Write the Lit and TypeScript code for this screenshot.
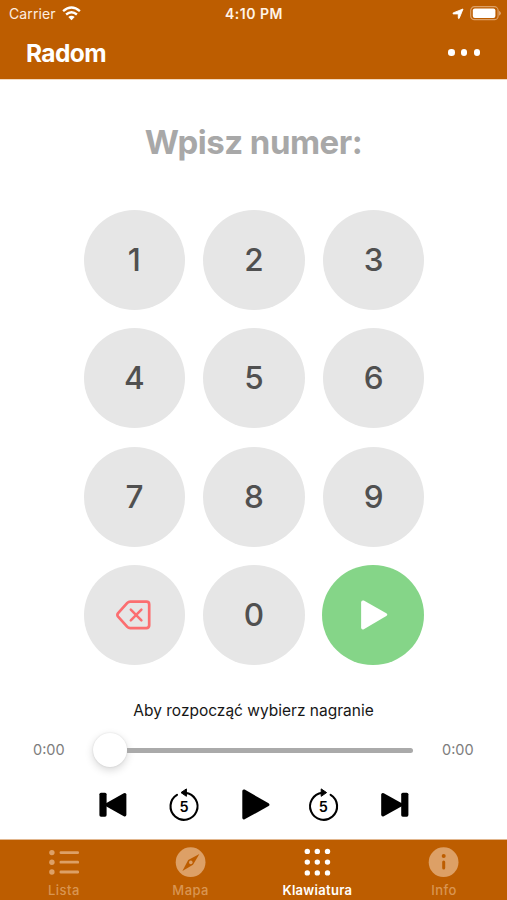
import { LitElement, html, svg, css } from "lit";
import { customElement, property, state } from "lit/decorators.js";
import { classMap } from "lit/directives/class-map.js";

const backspaceIcon = html`<svg width="36" height="32" viewBox="0 0 36 32" fill="none" stroke="#fb6e70" stroke-linecap="round" stroke-linejoin="round">
  <path stroke-width="2.7" d="M14.2 2.7H30.4Q33.2 2.7 33.2 5.5V26.3Q33.2 29.1 30.4 29.1H14.2Q12.5 29.1 11.3 27.9L2.1 17.6Q.7 15.9 2.1 14.2L11.3 3.9Q12.5 2.7 14.2 2.7Z" />
  <path stroke-width="2.5" d="M14.8 10.7l10.6 10.6M25.4 10.7L14.8 21.3" />
</svg>`;

const startIcon = html`<svg width="30" height="32" viewBox="0 0 30 32" fill="#fff">
  <path d="M3.8 1.6L26.3 14.3Q28.4 15.7 26.3 17.1L3.8 30.2Q1.2 31 1.1 28.4V3.4Q1.2.8 3.8 1.6Z" />
</svg>`;

const previousIcon = html`<svg width="40" height="36" viewBox="0 0 40 36">
  <rect x="6.4" y="5.7" width="7.2" height="24" rx="1.6" />
  <path d="M13 16.2L30.8 6.2Q33.2 5.4 33.4 7.6V27.8Q33.2 30 30.8 29.2L13 19.2Q11.4 17.7 13 16.2Z" />
</svg>`;

const nextIcon = html`<svg width="40" height="36" viewBox="0 0 40 36">
  <rect x="26.2" y="5.7" width="7.2" height="24" rx="1.6" />
  <path d="M26.8 16.2L8.8 6.2Q6.4 5.4 6.2 7.6V27.8Q6.4 30 8.8 29.2L26.8 19.2Q28.4 17.7 26.8 16.2Z" />
</svg>`;

const playIcon = html`<svg width="40" height="36" viewBox="0 0 40 36">
  <path d="M10.6 2.6L34.6 16.3Q36.4 17.7 34.6 19.1L10.6 32.3Q8.4 33 8.3 30.8V4.1Q8.4 1.9 10.6 2.6Z" />
</svg>`;

const ring = svg`<path fill="none" stroke="#000" stroke-width="2.1" stroke-linecap="round" d="M13 7.8A13.5 13.5 0 1 0 21.4 5.9" />
  <path stroke="#000" stroke-width="1" stroke-linejoin="round" d="M17 5.6L22.4 1.9V9.3Z" />`;

const rewindIcon = html`<svg class="seek" width="40" height="36" viewBox="0 0 40 36">
  ${ring}<text x="20.1" y="24.8">5</text>
</svg>`;

const forwardIcon = html`<svg class="seek" width="40" height="36" viewBox="0 0 40 36">
  <g transform="matrix(-1 0 0 1 39.6 0)">${ring}</g><text x="19.4" y="24.8">5</text>
</svg>`;

const listIcon = html`<svg width="32" height="32" viewBox="0 0 32 32" fill="currentColor">
  ${[6.6, 16.2, 26].map(
    (y) => svg`<circle cx="4.9" cy=${y} r="2.7" /><rect x="12.6" y=${y - 1.4} width="19.4" height="2.8" rx="1.2" />`
  )}
</svg>`;

const compassIcon = html`<svg width="32" height="32" viewBox="0 0 32 32" fill="currentColor">
  <circle cx="16.6" cy="16.2" r="14.9" />
  <path fill="#bd5d00" d="M25.4 8L19 18.8L8.4 25L14.2 14Z" />
  <circle cx="16.8" cy="16.4" r="1.8" />
</svg>`;

const keypadIcon = html`<svg width="32" height="32" viewBox="0 0 32 32" fill="currentColor">
  ${[5.4, 16.1, 26.9].map((y) => [6.3, 16.3, 26.5].map((x) => svg`<circle cx=${x} cy=${y} r="2.7" />`))}
</svg>`;

const infoIcon = html`<svg width="32" height="32" viewBox="0 0 32 32" fill="currentColor">
  <circle cx="15.6" cy="16.2" r="14.9" />
  <g fill="#bd5d00"><circle cx="15.7" cy="10.1" r="2" /><rect x="14.2" y="14.4" width="3" height="9.2" rx="1.5" /></g>
</svg>`;

@customElement("status-bar")
class StatusBar extends LitElement {
  static styles = css`
    :host { display: grid; grid-template-columns: 1fr auto 1fr; align-items: center; height: 27px; padding: 0 6px 0 9px; color: #fff; font-size: 14px; }
    .carrier, .status { display: flex; align-items: center; }
    .carrier { gap: 6px; color: #fdeee0; letter-spacing: 0.1px; }
    .clock { font-weight: 600; font-size: 14px; letter-spacing: 0.5px; margin-right: 2px; color: #fff4e8; }
    .status { justify-content: flex-end; gap: 6px; }
    svg { display: block; }
  `;
  render() {
    return html`
      <div class="carrier"><span>Carrier</span>
        <svg width="19" height="15" viewBox="0 0 19 15" fill="none" stroke="#fff" stroke-width="2.4">
          <path d="M1.1 5.2Q9.5 -2.1 17.9 5.2" /><path d="M4.1 8.5Q9.5 3.9 14.9 8.5" />
          <path fill="#fff" stroke="none" d="M6.3 10.9Q9.5 8.4 12.7 10.9L9.5 14.2Z" />
        </svg>
      </div>
      <div class="clock">4:10 PM</div>
      <div class="status">
        <svg width="12" height="12" viewBox="0 0 12 12" fill="#fff" stroke="#fff" stroke-width=".9" stroke-linejoin="round"><path d="M11 1L7.2 10.3Q6.6 11 6.3 10V5.9H1.4Q.5 5.5 1.2 4.9Z" /></svg>
        <svg width="31" height="15" viewBox="0 0 31 15">
          <rect x=".7" y=".7" width="27.4" height="13" rx="3.8" fill="none" stroke="#dda066" stroke-width="1.2" />
          <rect x="2.8" y="2.5" width="22.6" height="9.5" rx="2" fill="#fff" />
          <path fill="#dda066" d="M29 4.8Q31 6 31 7.3T29 9.8Z" />
        </svg>
      </div>`;
  }
}

@customElement("tab-item")
class TabItem extends LitElement {
  @property() label = "";
  @property({ type: Boolean }) active = false;
  @property({ attribute: false }) icon: unknown;
  static styles = css`
    :host { display: block; flex: 1; }
    .tab { display: flex; flex-direction: column; align-items: center; padding-top: 6px; color: #dda066; }
    .label { font: 500 13px/16px Inter, sans-serif; margin: 4px 0 0 1px; letter-spacing: 0.45px; color: #d99552; }
    .active { color: #fff; }
    .active .label { color: #fff; font-weight: 600; letter-spacing: 0.3px; }
    svg { display: block; }
  `;
  render() {
    return html`<div class=${classMap({ tab: true, active: this.active })}>${this.icon}<span class="label">${this.label}</span></div>`;
  }
}

@customElement("audio-player")
class AudioPlayer extends LitElement {
  static styles = css`
    :host { display: block; }
    .hint { text-align: center; font-size: 15.5px; line-height: 20px; color: #161616; }
    .timeline { display: flex; align-items: center; height: 36px; margin-top: 10.5px; padding: 0 33px; color: #7d7d7d; font-size: 14.5px; }
    .time { width: 32px; white-space: nowrap; }
    .slider { flex: 1; display: flex; align-items: center; margin: 0 29px 0 28px; }
    .thumb { width: 34px; height: 34px; border-radius: 50%; background: #fff; box-shadow: 0 3px 9px rgba(0, 0, 0, 0.16), 0 0 2px rgba(0, 0, 0, 0.12); }
    .track { flex: 1; height: 5px; margin-top: 1px; border-radius: 0 3px 3px 0; background: #aaa; }
    .controls { display: flex; justify-content: center; gap: 30.3px; margin: 19px 0 0 1px; }
    svg { display: block; }
    .seek text { font: 600 14.5px Inter, sans-serif; text-anchor: middle; }
  `;
  render() {
    return html`
      <div class="hint">Aby rozpocząć wybierz nagranie</div>
      <div class="timeline">
        <span class="time">0:00</span>
        <div class="slider"><div class="thumb"></div><div class="track"></div></div>
        <span class="time">0:00</span>
      </div>
      <div class="controls">${previousIcon}${rewindIcon}${playIcon}${forwardIcon}${nextIcon}</div>`;
  }
}

@customElement("app-root")
class AppRoot extends LitElement {
  @state() private activeTab = "Klawiatura";

  private tabs = [
    { label: "Lista", icon: listIcon },
    { label: "Mapa", icon: compassIcon },
    { label: "Klawiatura", icon: keypadIcon },
    { label: "Info", icon: infoIcon },
  ];

  static styles = css`
    :host { display: flex; flex-direction: column; height: 900px; overflow: hidden; background: #fff; font-family: Inter, sans-serif; }
    .header { height: 79px; background: #bd5d00; box-shadow: 0 1px 0 #f3d9bf; }
    .bar { display: flex; align-items: center; justify-content: space-between; height: 51px; padding: 0 27px 0 26px; }
    .title { color: #fff; font-size: 24.5px; font-weight: 700; letter-spacing: -0.6px; }
    .more { display: flex; gap: 6.3px; }
    .dot { width: 6.4px; height: 6.4px; border-radius: 50%; background: #fff; }
    .main { flex: 1; }
    .prompt { margin-top: 42px; text-align: center; color: #a8a8a8; font-size: 33px; line-height: 42px; font-weight: 700; letter-spacing: -0.5px; }
    .keypad { display: grid; grid-template-columns: repeat(3, 101.3px); grid-auto-rows: 100px; gap: 18.5px 18.3px; justify-content: center; margin: 46.8px 0 36px 1px; }
    .key { display: flex; align-items: center; justify-content: center; box-sizing: border-box; border-radius: 50%; background: #e6e6e6; color: #505050; font-size: 31.5px; line-height: 40px; font-weight: 500; }
    .go { background: #85d588; padding-left: 3px; margin: 0 0.5px 0 -0.5px; }
    .key svg { display: block; }
    .tabs { display: flex; height: 60px; background: #bd5d00; box-shadow: 0 -1px 0 #e2b78f; }
  `;

  render() {
    return html`
      <div class="header">
        <status-bar></status-bar>
        <div class="bar">
          <div class="title">Radom</div>
          <div class="more"><i class="dot"></i><i class="dot"></i><i class="dot"></i></div>
        </div>
      </div>
      <div class="main">
        <div class="prompt">Wpisz numer:</div>
        <div class="keypad">
          ${[1, 2, 3, 4, 5, 6, 7, 8, 9].map((n) => html`<div class="key">${n}</div>`)}
          <div class="key">${backspaceIcon}</div>
          <div class="key">0</div>
          <div class="key go">${startIcon}</div>
        </div>
        <audio-player></audio-player>
      </div>
      <div class="tabs">
        ${this.tabs.map((t) => html`<tab-item .label=${t.label} .icon=${t.icon} ?active=${t.label === this.activeTab}></tab-item>`)}
      </div>`;
  }
}
